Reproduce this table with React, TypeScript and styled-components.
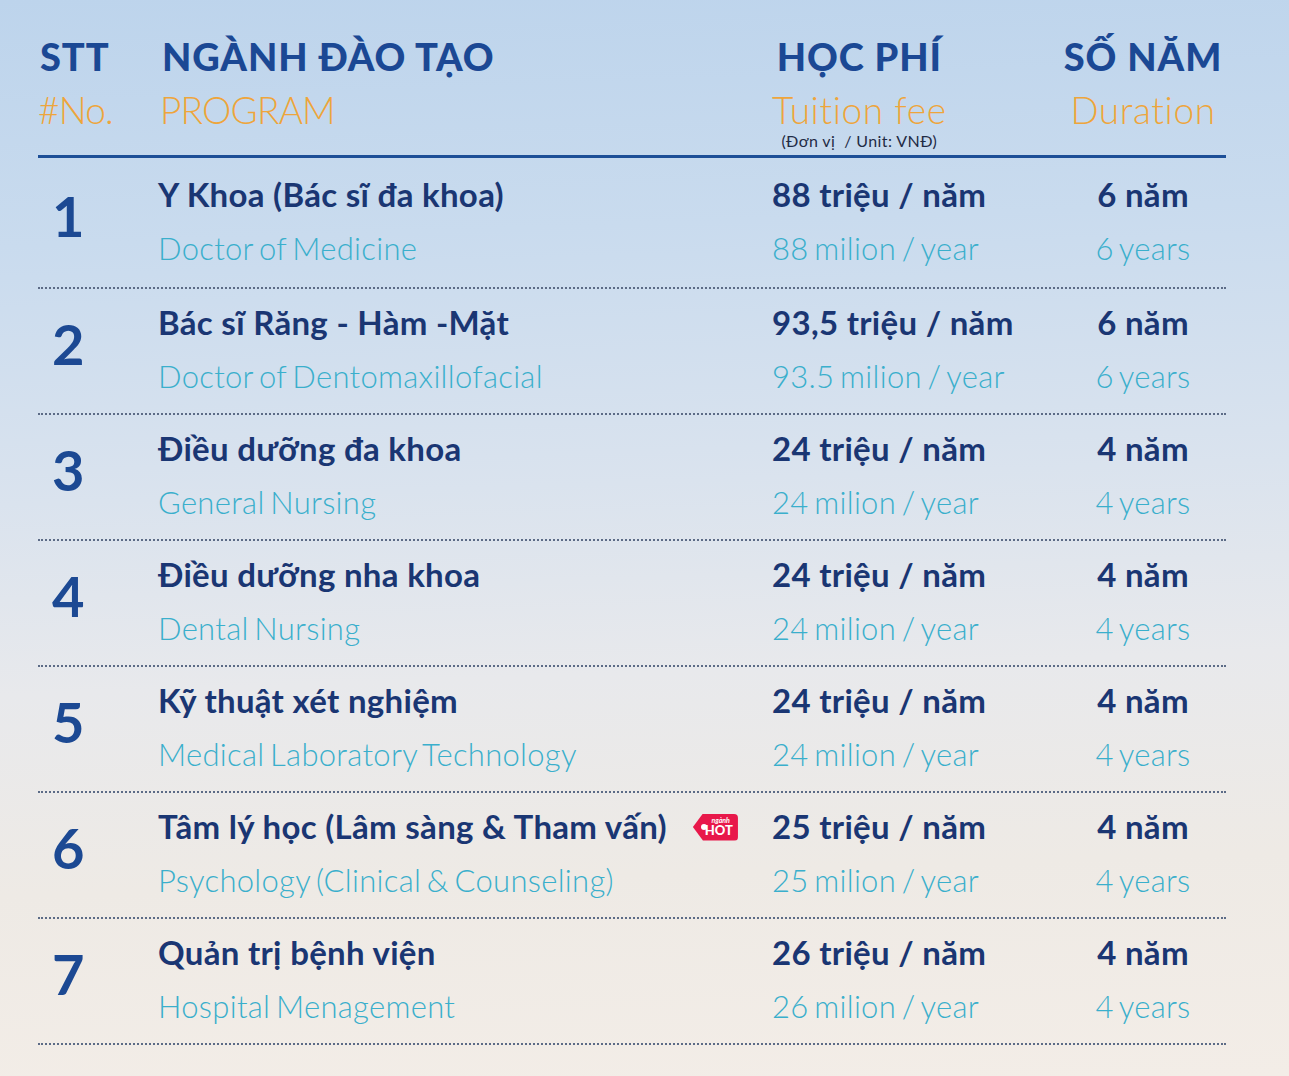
import React from "react";
import styled, { createGlobalStyle } from "styled-components";

const GlobalStyle = createGlobalStyle`
  html, body {
    margin: 0;
    padding: 0;
  }
  body {
    width: 1289px;
    height: 1076px;
    overflow: hidden;
    font-family: "Lato", "Noto Sans", sans-serif;
    background: linear-gradient(178deg, #bdd4ec 0%, #c9dbee 22%, #dae3ee 45%, #e8e9ec 62%, #eeeae5 80%, #f3ede7 100%);
  }
`;

const Page = styled.div`
  width: 1289px;
  height: 1076px;
  overflow: hidden;
  box-sizing: border-box;
  padding: 29px 63px 0 38px;
`;

const Grid = styled.div`
  display: grid;
  grid-template-columns: 120px 614px 288px 1fr;
`;

const HeaderRow = styled(Grid)`
  height: 126px;
  align-items: start;
  border-bottom: 3px solid #1d4f97;
`;

const HeadCell = styled.div<{ $center?: boolean; $pad?: number }>`
  display: flex;
  flex-direction: column;
  align-items: ${(p) => (p.$center ? "center" : "flex-start")};
  padding-left: ${(p) => p.$pad ?? 0}px;
`;

const FeeHead = styled.div`
  display: inline-flex;
  flex-direction: column;
  align-items: center;
  align-self: start;
  justify-self: start;
`;

const HeadVi = styled.div`
  font-family: "Lato", sans-serif;
  font-weight: 900;
  font-size: 38px;
  line-height: 54px;
  letter-spacing: 0.9px;
  color: #1b4894;
  white-space: nowrap;
`;

const HeadEn = styled.div<{ $wide?: boolean; $shift?: number }>`
  font-family: "Lato", sans-serif;
  font-weight: 300;
  font-size: 37px;
  line-height: 54px;
  color: #eea53b;
  white-space: nowrap;
  letter-spacing: ${(p) => (p.$wide ? "0.6px" : "-0.8px")};
  margin-left: ${(p) => p.$shift ?? 0}px;
`;

const Unit = styled.div`
  font-family: "Lato", sans-serif;
  font-size: 16px;
  line-height: 18px;
  margin-top: -5px;
  letter-spacing: 0.4px;
  color: #1f2b45;
  white-space: nowrap;
`;

const Row = styled(Grid)`
  height: 126px;
  align-items: center;
  border-bottom: 2px dotted #5c6b86;
  padding-bottom: 4px;
  box-sizing: border-box;
`;

const FirstRow = styled(Row)`
  height: 131px;
`;

const Num = styled.div`
  font-family: "Lato", sans-serif;
  font-weight: 700;
  font-size: 56px;
  line-height: 60px;
  color: #1c4993;
  padding-left: 14px;
  margin-top: -10px;
`;

const Cell = styled.div<{ $center?: boolean }>`
  display: flex;
  flex-direction: column;
  align-items: ${(p) => (p.$center ? "center" : "flex-start")};
`;

const Vi = styled.div`
  display: flex;
  align-items: center;
  font-family: "Lato", sans-serif;
  font-weight: 700;
  font-size: 33px;
  line-height: 54px;
  letter-spacing: 0.3px;
  color: #1a3673;
  white-space: nowrap;
`;

const En = styled.div`
  font-family: "Lato", sans-serif;
  font-weight: 300;
  font-size: 31px;
  line-height: 54px;
  letter-spacing: 0.3px;
  word-spacing: -3px;
  color: #3aafcc;
  white-space: nowrap;
`;

const Badge = styled.span`
  position: relative;
  display: inline-flex;
  flex-direction: column;
  align-items: flex-end;
  justify-content: center;
  width: 45px;
  height: 27px;
  margin-left: 26px;
  margin-top: 2px;
  padding-right: 5px;
  box-sizing: border-box;
  background: #e8184a;
  border-radius: 4px;
  clip-path: polygon(10px 0, 100% 0, 100% 100%, 10px 100%, 0 50%);
  color: #fff;
  font-family: "Lato", sans-serif;
  letter-spacing: 0;
  &::before {
    content: "";
    position: absolute;
    left: 8px;
    top: 10px;
    width: 6px;
    height: 6px;
    border-radius: 50%;
    background: #fff;
  }
`;

const BadgeSmall = styled.span`
  font-size: 7px;
  line-height: 7px;
  font-style: italic;
  margin-right: 3px;
`;

const BadgeHot = styled.span`
  font-size: 13px;
  line-height: 13px;
  font-weight: 900;
`;

type Item = {
  vi: string;
  en: string;
  fee: string;
  feeEn: string;
  years: string;
  yearsEn: string;
  hot?: boolean;
};

const items: Item[] = [
  { vi: "Y Khoa (Bác sĩ đa khoa)", en: "Doctor of Medicine", fee: "88 triệu / năm", feeEn: "88 milion / year", years: "6 năm", yearsEn: "6 years" },
  { vi: "Bác sĩ Răng - Hàm -Mặt", en: "Doctor of Dentomaxillofacial", fee: "93,5 triệu / năm", feeEn: "93.5 milion / year", years: "6 năm", yearsEn: "6 years" },
  { vi: "Điều dưỡng đa khoa", en: "General Nursing", fee: "24 triệu / năm", feeEn: "24 milion / year", years: "4 năm", yearsEn: "4 years" },
  { vi: "Điều dưỡng nha khoa", en: "Dental Nursing", fee: "24 triệu / năm", feeEn: "24 milion / year", years: "4 năm", yearsEn: "4 years" },
  { vi: "Kỹ thuật xét nghiệm", en: "Medical Laboratory Technology", fee: "24 triệu / năm", feeEn: "24 milion / year", years: "4 năm", yearsEn: "4 years" },
  { vi: "Tâm lý học (Lâm sàng & Tham vấn)", en: "Psychology (Clinical & Counseling)", fee: "25 triệu / năm", feeEn: "25 milion / year", years: "4 năm", yearsEn: "4 years", hot: true },
  { vi: "Quản trị bệnh viện", en: "Hospital Menagement", fee: "26 triệu / năm", feeEn: "26 milion / year", years: "4 năm", yearsEn: "4 years" },
];

export default function App() {
  return (
    <>
      <GlobalStyle />
      <Page>
        <HeaderRow>
          <HeadCell $pad={2}>
            <HeadVi>STT</HeadVi>
            <HeadEn $shift={-2}>#No.</HeadEn>
          </HeadCell>
          <HeadCell $pad={4}>
            <HeadVi>NGÀNH ĐÀO TẠO</HeadVi>
            <HeadEn $shift={-2}>PROGRAM</HeadEn>
          </HeadCell>
          <FeeHead>
            <HeadVi>HỌC PHÍ</HeadVi>
            <HeadEn $wide>Tuition fee</HeadEn>
            <Unit>(Đơn vị&nbsp; / Unit: VNĐ)</Unit>
          </FeeHead>
          <HeadCell $center>
            <HeadVi>SỐ NĂM</HeadVi>
            <HeadEn $wide>Duration</HeadEn>
          </HeadCell>
        </HeaderRow>
        {items.map((it, i) => {
          const R = i === 0 ? FirstRow : Row;
          return (
            <R key={i}>
              <Num>{i + 1}</Num>
              <Cell>
                <Vi>
                  {it.vi}
                  {it.hot && (
                    <Badge>
                      <BadgeSmall>ngành</BadgeSmall>
                      <BadgeHot>HOT</BadgeHot>
                    </Badge>
                  )}
                </Vi>
                <En>{it.en}</En>
              </Cell>
              <Cell>
                <Vi>{it.fee}</Vi>
                <En>{it.feeEn}</En>
              </Cell>
              <Cell $center>
                <Vi>{it.years}</Vi>
                <En>{it.yearsEn}</En>
              </Cell>
            </R>
          );
        })}
      </Page>
    </>
  );
}
